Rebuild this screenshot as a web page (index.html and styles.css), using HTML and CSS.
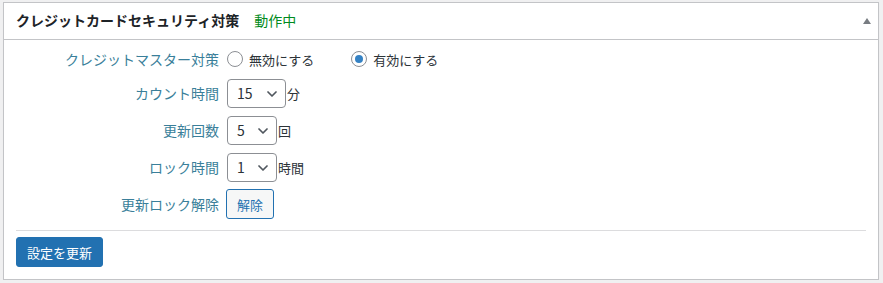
FILE: index.html
```html
<!DOCTYPE html>
<html lang="ja">
<head>
<meta charset="utf-8">
<link rel="stylesheet" href="styles.css">
</head>
<body>
<div class="postbox">
  <div class="postbox-header">
    <h2 class="title">クレジットカードセキュリティ対策<span class="status">動作中</span></h2>
    <span class="toggle"></span>
  </div>
  <div class="inside">
    <div class="form">
      <div class="label">クレジットマスター対策</div>
      <div class="field radios">
        <label class="radio-label first"><span class="radio"></span>無効にする</label>
        <label class="radio-label"><span class="radio checked"></span>有効にする</label>
      </div>

      <div class="label">カウント時間</div>
      <div class="field"><span class="select wide"><span>15</span><svg class="chev" viewBox="0 0 10 6" width="10" height="6"><polyline points="1,1 5,5 9,1"/></svg></span><span class="unit">分</span></div>

      <div class="label">更新回数</div>
      <div class="field"><span class="select"><span>5</span><svg class="chev" viewBox="0 0 10 6" width="10" height="6"><polyline points="1,1 5,5 9,1"/></svg></span><span class="unit">回</span></div>

      <div class="label">ロック時間</div>
      <div class="field"><span class="select"><span>1</span><svg class="chev" viewBox="0 0 10 6" width="10" height="6"><polyline points="1,1 5,5 9,1"/></svg></span><span class="unit">時間</span></div>

      <div class="label">更新ロック解除</div>
      <div class="field"><button class="button secondary">解除</button></div>
    </div>
    <hr class="sep">
    <button class="button primary">設定を更新</button>
  </div>
</div>
</body>
</html>
```
FILE: styles.css
```css
* { box-sizing: border-box; }
html, body {
  margin: 0;
  background: #f0f0f1;
}
body {
  padding: 2px 4px 0 3px;
  font-family: "Noto Sans CJK JP", "Noto Sans", sans-serif;
  font-size: 14px;
  color: #2c3338;
}
.postbox {
  background: #fff;
  border: 1px solid #c3c4c7;
  height: 278px;
  box-shadow: 0 1px 1px rgba(0,0,0,0.04);
}
.postbox-header {
  height: 37px;
  border-bottom: 1px solid #c3c4c7;
  display: flex;
  align-items: center;
  justify-content: space-between;
  padding: 0 7px 0 12px;
}
.title {
  margin: 0;
  font-size: 14px;
  font-weight: 700;
  line-height: 1.4;
  color: #1d2327;
}
.status {
  color: #008a20;
  font-weight: 400;
  margin-left: 15px;
}
.toggle {
  width: 0;
  height: 0;
  border-left: 4px solid transparent;
  border-right: 4px solid transparent;
  border-bottom: 6px solid #787c82;
  margin-top: -1px;
}
.inside {
  padding: 7px 12px 0 12px;
}
.form {
  display: grid;
  grid-template-columns: 215px 1fr;
  column-gap: 8px;
  row-gap: 7px;
  grid-template-rows: 24px 30px 30px 30px 30px;
  align-items: center;
  margin-left: -12px;
}
.label {
  text-align: right;
  color: #3a7f9a;
  line-height: 1;
  white-space: nowrap;
}
.form > .label:nth-child(1) { margin-top: -1px; }
.field {
  display: flex;
  align-items: center;
}
.radio-label {
  display: flex;
  align-items: center;
  color: #2c3338;
  font-size: 13px;
}
.radio-label.first { margin-right: 37px; }
.radio {
  width: 16px;
  height: 16px;
  border: 1px solid #8c8f94;
  border-radius: 50%;
  margin-right: 6px;
  display: inline-flex;
  align-items: center;
  justify-content: center;
}
.radio.checked::before {
  content: "";
  width: 8px;
  height: 8px;
  border-radius: 50%;
  background: #3582c4;
}
.select {
  display: inline-flex;
  align-items: center;
  justify-content: space-between;
  height: 29px;
  width: 50px;
  padding: 0 8px 0 9px;
  border: 1px solid #8c8f94;
  border-radius: 4px;
  color: #2c3338;
  font-size: 14px;
}
.select.wide { width: 59px; }
.chev {
  margin-top: 1px;
  fill: none;
  stroke: #50575e;
  stroke-width: 1.7;
  stroke-linecap: round;
  stroke-linejoin: round;
}
.unit {
  margin-left: 1px;
  color: #2c3338;
  font-size: 13px;
}
.button {
  font-family: inherit;
  font-size: 13px;
  height: 30px;
  padding: 0 10px;
  border-radius: 3px;
  border: 1px solid #2271b1;
  cursor: pointer;
  line-height: 1;
}
.secondary {
  background: #f6f7f7;
  color: #2271b1;
  margin-left: -1px;
}
.primary {
  background: #2271b1;
  color: #fff;
  display: block;
}
.sep {
  border: 0;
  border-top: 1px solid #dcdcde;
  margin: 11px 0 6px 0;
}
```
